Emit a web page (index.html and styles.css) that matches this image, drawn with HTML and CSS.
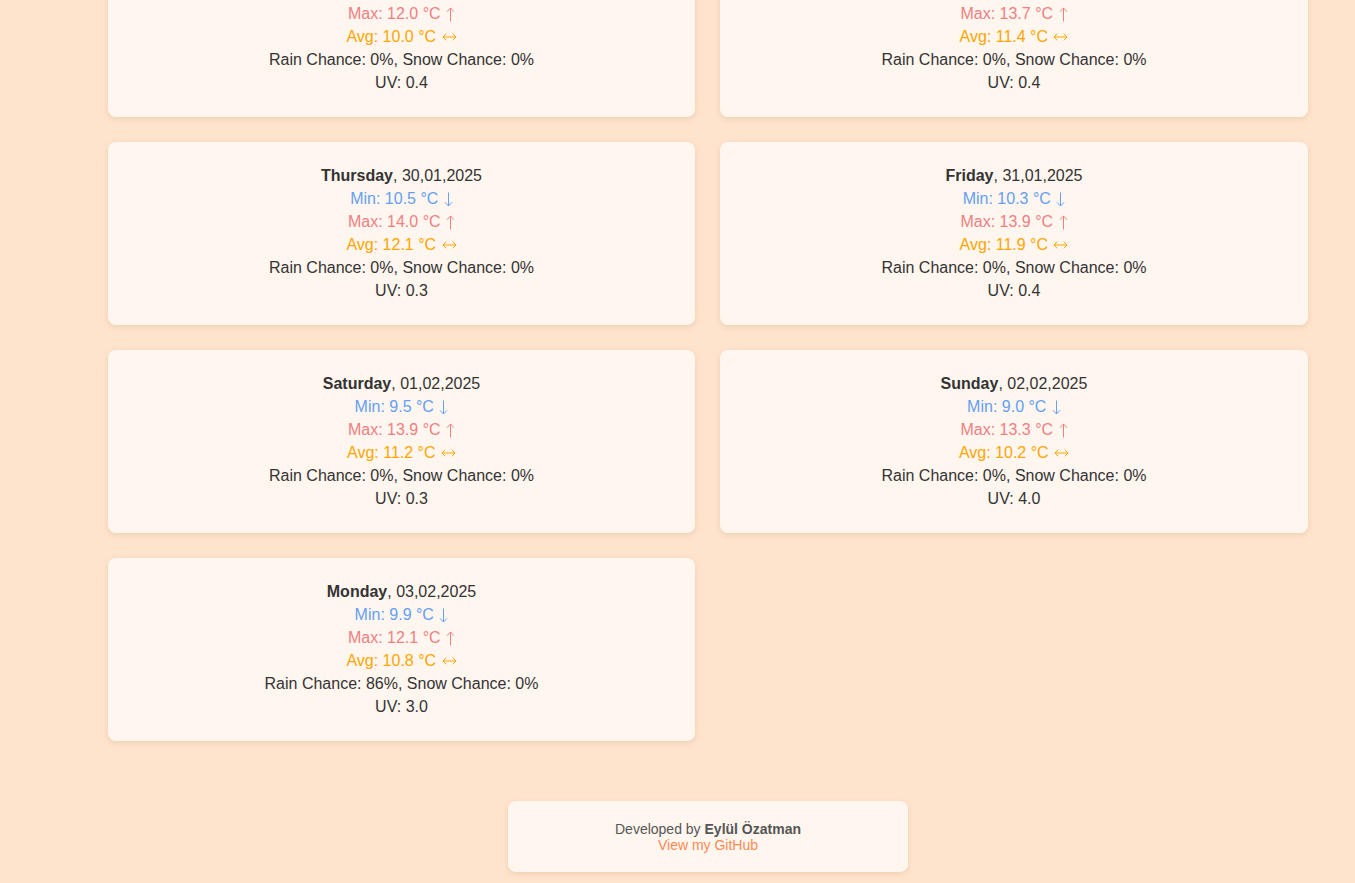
FILE: index.html
```html
<!DOCTYPE html>
<html lang="en">
<head>
<meta charset="utf-8">
<title>Weather Forecast</title>
<link rel="stylesheet" href="styles.css">
</head>
<body>
<svg class="defs" width="0" height="0" aria-hidden="true">
  <defs>
    <symbol id="down" viewBox="0 0 9 15"><path d="M4.5 0.5V14M1 10.3L4.5 14L8 10.3" fill="none" stroke="currentColor" stroke-width="1"/></symbol>
    <symbol id="up" viewBox="0 0 9 15"><path d="M4.5 14.5V1M1 4.7L4.5 1L8 4.7" fill="none" stroke="currentColor" stroke-width="1"/></symbol>
    <symbol id="both" viewBox="0 0 15 8"><path d="M1 4H14M4.2 0.7L1 4L4.2 7.3M10.8 0.7L14 4L10.8 7.3" fill="none" stroke="currentColor" stroke-width="1"/></symbol>
  </defs>
</svg>
<main class="forecast">
  <div class="card">
    <div><b>Tuesday</b>, 28,01,2025</div>
    <div class="min">Min: 8.1 °C <svg class="arr-v"><use href="#down"/></svg></div>
    <div class="max">Max: 12.0 °C <svg class="arr-v"><use href="#up"/></svg></div>
    <div class="avg">Avg: 10.0 °C <svg class="arr-h"><use href="#both"/></svg></div>
    <div>Rain Chance: 0%, Snow Chance: 0%</div>
    <div>UV: 0.4</div>
  </div>
  <div class="card">
    <div><b>Wednesday</b>, 29,01,2025</div>
    <div class="min">Min: 9.6 °C <svg class="arr-v"><use href="#down"/></svg></div>
    <div class="max">Max: 13.7 °C <svg class="arr-v"><use href="#up"/></svg></div>
    <div class="avg">Avg: 11.4 °C <svg class="arr-h"><use href="#both"/></svg></div>
    <div>Rain Chance: 0%, Snow Chance: 0%</div>
    <div>UV: 0.4</div>
  </div>
  <div class="card">
    <div><b>Thursday</b>, 30,01,2025</div>
    <div class="min">Min: 10.5 °C <svg class="arr-v"><use href="#down"/></svg></div>
    <div class="max">Max: 14.0 °C <svg class="arr-v"><use href="#up"/></svg></div>
    <div class="avg">Avg: 12.1 °C <svg class="arr-h"><use href="#both"/></svg></div>
    <div>Rain Chance: 0%, Snow Chance: 0%</div>
    <div>UV: 0.3</div>
  </div>
  <div class="card">
    <div><b>Friday</b>, 31,01,2025</div>
    <div class="min">Min: 10.3 °C <svg class="arr-v"><use href="#down"/></svg></div>
    <div class="max">Max: 13.9 °C <svg class="arr-v"><use href="#up"/></svg></div>
    <div class="avg">Avg: 11.9 °C <svg class="arr-h"><use href="#both"/></svg></div>
    <div>Rain Chance: 0%, Snow Chance: 0%</div>
    <div>UV: 0.4</div>
  </div>
  <div class="card">
    <div><b>Saturday</b>, 01,02,2025</div>
    <div class="min">Min: 9.5 °C <svg class="arr-v"><use href="#down"/></svg></div>
    <div class="max">Max: 13.9 °C <svg class="arr-v"><use href="#up"/></svg></div>
    <div class="avg">Avg: 11.2 °C <svg class="arr-h"><use href="#both"/></svg></div>
    <div>Rain Chance: 0%, Snow Chance: 0%</div>
    <div>UV: 0.3</div>
  </div>
  <div class="card">
    <div><b>Sunday</b>, 02,02,2025</div>
    <div class="min">Min: 9.0 °C <svg class="arr-v"><use href="#down"/></svg></div>
    <div class="max">Max: 13.3 °C <svg class="arr-v"><use href="#up"/></svg></div>
    <div class="avg">Avg: 10.2 °C <svg class="arr-h"><use href="#both"/></svg></div>
    <div>Rain Chance: 0%, Snow Chance: 0%</div>
    <div>UV: 4.0</div>
  </div>
  <div class="card">
    <div><b>Monday</b>, 03,02,2025</div>
    <div class="min">Min: 9.9 °C <svg class="arr-v"><use href="#down"/></svg></div>
    <div class="max">Max: 12.1 °C <svg class="arr-v"><use href="#up"/></svg></div>
    <div class="avg">Avg: 10.8 °C <svg class="arr-h"><use href="#both"/></svg></div>
    <div>Rain Chance: 86%, Snow Chance: 0%</div>
    <div>UV: 3.0</div>
  </div>
</main>
<footer class="footer">
  <div>Developed by <b>Eylül Özatman</b></div>
  <a class="footer-link" href="#">View my GitHub</a>
</footer>
</body>
</html>
```

FILE: styles.css
```css
html, body {
  margin: 0;
  padding: 0;
}

body {
  background: #ffe4cd;
  font-family: "Liberation Sans", Arial, sans-serif;
  color: #333333;
  padding-bottom: 11px;
}

.defs {
  position: absolute;
  width: 0;
  height: 0;
  overflow: hidden;
}

.forecast {
  display: grid;
  grid-template-columns: 587px 588px;
  gap: 25px;
  width: 1200px;
  margin: -66px 0 0 108px;
}

.card {
  background: #fff6f0;
  border-radius: 8px;
  box-shadow: 0 2px 6px rgba(160, 110, 70, 0.18);
  padding: 22px 0 23px;
  text-align: center;
  font-size: 16px;
  line-height: 23px;
}

.card b {
  font-weight: bold;
}

.arr-v {
  width: 9px;
  height: 15px;
  margin-left: 1px;
  vertical-align: -3px;
}

.arr-h {
  width: 15px;
  height: 8px;
  margin-left: 1px;
  vertical-align: 1px;
}

.min { color: #64a0f2; }
.max { color: #f07f80; }
.avg { color: #ffa500; }

.footer {
  width: 400px;
  margin: 60px 0 0 508px;
  box-sizing: border-box;
  padding: 20px 0 19px;
  background: #fff6f0;
  border-radius: 8px;
  box-shadow: 0 2px 6px rgba(160, 110, 70, 0.18);
  text-align: center;
  font-size: 14px;
  line-height: 16px;
  color: #555555;
}

.footer-link {
  color: #ff8a50;
  text-decoration: none;
}
```
